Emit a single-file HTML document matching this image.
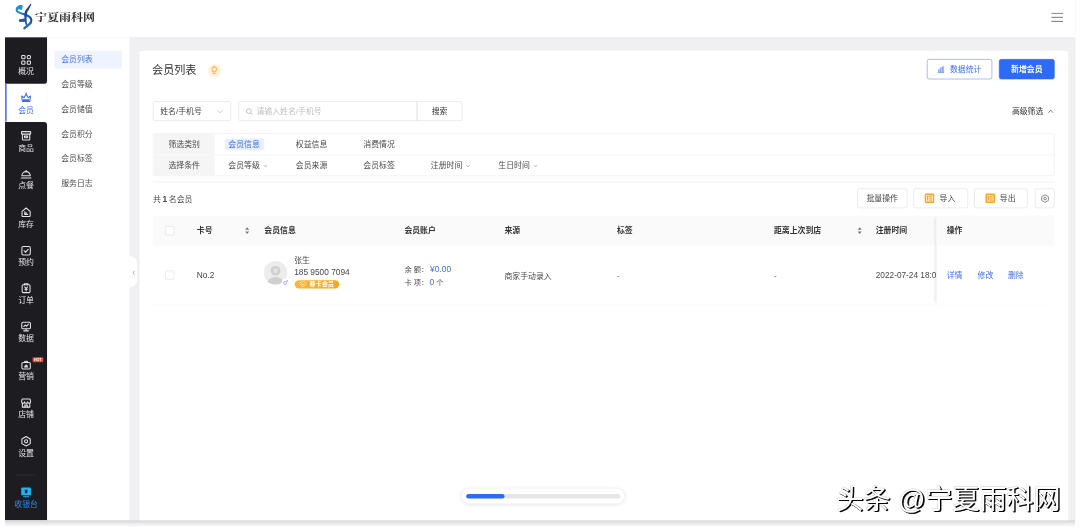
<!DOCTYPE html>
<html lang="zh-CN">
<head>
<meta charset="utf-8">
<title>会员列表</title>
<style>
html,body{margin:0;padding:0;background:#fff;width:1080px;height:529px;overflow:hidden}
body{font-family:"Liberation Sans","Noto Sans CJK SC",sans-serif;position:relative}
#app{filter:blur(0.7px);position:absolute;left:4.8px;top:0;width:1903px;height:925px;transform:scale(0.5625);transform-origin:0 0;background:#f0f0f2;overflow:hidden;font-size:14px;color:#333;line-height:1}
#shadow{position:absolute;left:5px;top:519.8px;width:1070px;height:7px;background:linear-gradient(#d3d3d3,#e6e6e6 40%,#fff)}
.abs{position:absolute}
#header{position:absolute;left:0;top:0;width:1903px;height:66px;background:#fff;box-shadow:0 2px 6px rgba(0,0,0,.03);z-index:3}
#side{position:absolute;left:0;top:66px;width:75px;height:859px;background:#fff}
#side .rt{position:absolute;left:0;width:75px;background:#1c1c21;border-bottom-right-radius:6px}
#side .rb{position:absolute;left:0;width:75px;background:#1c1c21;border-top-right-radius:6px}
.hot{position:absolute;left:48.5px;top:12.5px;width:19px;height:9px;background:#f5452e;border-radius:2px;color:#fff;font-size:6.5px;font-style:normal;font-weight:bold;line-height:9px;text-align:center;letter-spacing:-0.3px}
.nav.cash{color:#2b8df6}
.nav.cash svg{color:#1ab3f7}
.nav{position:absolute;left:0;width:75px;height:68px;color:#e4e4e6;text-align:center}
.nav svg{position:absolute;left:27px;top:15.5px;width:21px;height:21px}
.nav span{position:absolute;left:0;width:75px;top:39px;font-size:14px;line-height:16px}
.nav.act{color:#3d6cf5}
.nav.act:before{content:"";position:absolute;left:0;top:0;width:2.5px;height:68px;background:#5577f2}
#sub{position:absolute;left:75px;top:66px;width:146px;height:859px;background:#fff}
.si{position:absolute;left:13px;width:120px;height:32px;line-height:32px;padding-left:12px;box-sizing:border-box;font-size:14px;color:#4d4d4d;border-radius:3px}
.si.act{background:#eff3ff;color:#4a72f0}
#card{position:absolute;left:239px;top:90px;width:1651px;height:860px;background:#fff;border-radius:5px}

#title{position:absolute;left:22.5px;top:20.5px;font-size:19.7px;line-height:28px;color:#333}
#bulb{position:absolute;left:122px;top:24px;width:23px;height:23px;border-radius:12px;background:#fff0d9}
#bulb svg{position:absolute;left:4px;top:3px;width:14px;height:16px}
.btn{position:absolute;box-sizing:border-box;border:1px solid #dedede;border-radius:4px;background:#fff;color:#555;font-size:14px;text-align:center;white-space:nowrap}
#b-stat{left:1400px;top:15px;width:116px;height:36px;line-height:34px;border-color:#6a8af6;color:#3d6cf5;padding-left:22px}
#b-stat svg{position:absolute;left:17px;top:11px;width:13px;height:13px}
#b-add{left:1528px;top:15px;width:99px;height:36px;line-height:34px;background:#2d6bf6;border-color:#2d6bf6;color:#fff;font-weight:bold}
#adv{position:absolute;left:1538px;top:98px;width:88px;font-size:14px;line-height:20px;color:#333;text-align:right;white-space:nowrap}
#sel{position:absolute;left:24px;top:90px;width:139px;height:35px;box-sizing:border-box;border:1px solid #dedede;border-radius:4px;line-height:33px;padding-left:12px;color:#444}
#sel svg{position:absolute;right:13px;top:12px;width:11px;height:11px}
#inp{position:absolute;left:176px;top:90px;width:318px;height:35px;box-sizing:border-box;border:1px solid #dedede;border-radius:4px 0 0 4px;line-height:33px;padding-left:31px;color:#c0c0c0}
#inp svg{position:absolute;left:12px;top:11px;width:13px;height:13px}
#sbtn{position:absolute;left:493px;top:90px;width:81px;height:35px;box-sizing:border-box;border:1px solid #dedede;border-radius:0 4px 4px 0;line-height:33px;text-align:center;color:#333}
#ftab{position:absolute;left:24px;top:147px;width:1603px;height:76px;box-sizing:border-box;border:1px solid #ebebeb;border-radius:4px;overflow:hidden}
#ftab .lab{position:absolute;left:0;width:109px;height:37px;background:#f5f5f5;text-align:center;line-height:37px;color:#4a4a4a}
#ftab .row2{top:37px;border-top:1px solid #ebebeb}
#ftab .ln{position:absolute;left:109px;top:37px;width:1500px;height:1px;background:#ebebeb}
#ftab .it{position:absolute;height:37px;line-height:37px;color:#4a4a4a;white-space:nowrap}
#ftab .pill{position:absolute;left:127px;top:8px;width:70px;height:21px;border-radius:3px;background:#e8efff}
.chev{display:inline-block;width:8px;height:8px;margin-left:6px;vertical-align:0}
#hr{position:absolute;left:24px;top:233px;width:1603px;height:1px;background:#ececec}
#cnt{position:absolute;left:24px;top:254px;font-size:14px;line-height:20px;color:#4a4a4a}

.tb{top:245px;height:35px;line-height:33px;color:#444}
.tb .xl{position:absolute;left:19px;top:8px;width:17px;height:17px;border-radius:2px;background:#f9a42b}
.tb .xl svg{position:absolute;left:2px;top:2px;width:13px;height:13px}
#tbl{position:absolute;left:24px;top:293px;width:1603px;height:160px;overflow:hidden}
#thead{position:absolute;left:0;top:0;width:1603px;height:53px;background:#fafafa}
.th{position:absolute;top:0;height:53px;line-height:53px;font-weight:bold;color:#333;font-size:14px;white-space:nowrap}
.td{position:absolute;top:53px;height:106px;line-height:106px;color:#4a4a4a;font-size:14px;white-space:nowrap}
#rowln{position:absolute;left:0;top:159px;width:1603px;height:1px;background:#ececec}
.cb{position:absolute;left:22px;width:16px;height:16px;box-sizing:border-box;border:1px solid #dedede;border-radius:2px;background:#fff}
.sort{position:absolute;top:20px;width:9px;height:14px}
#fix{position:absolute;left:1393px;top:0;width:210px;height:160px;background:#fff;box-shadow:-3px 0 6px -2px rgba(0,0,0,.16)}
#fix .h{position:absolute;left:0;top:0;width:210px;height:53px;background:#fafafa}
#fix a{position:absolute;top:53px;line-height:106px;color:#3d6cf5;font-size:14px;text-decoration:none}
#ava{position:absolute;left:197px;top:80.5px;width:42px;height:42px;border-radius:21px;background:#ececec;overflow:hidden}
#gender{position:absolute;left:229px;top:112px;width:10px;height:10px;background:#fff;border-radius:7px;padding:2px}
#vip{position:absolute;left:252px;top:115px;width:79px;height:15px;border-radius:8px;background:linear-gradient(90deg,#f9b73a,#f6a51c);color:#fff;font-size:11px;line-height:15px;font-weight:bold;box-sizing:border-box;padding-left:26px;white-space:nowrap}
#vip svg{position:absolute;left:8px;top:2px;width:14px;height:11px}
.lnk{color:#3d6cf5}
#sbar{position:absolute;left:812px;top:869px;width:289px;height:26px;border-radius:13px;background:#fff;box-shadow:0 1px 10px rgba(0,0,0,.13)}
#sbar .t{position:absolute;left:8px;top:9px;width:274px;height:8px;border-radius:4px;background:#e6e6e6}
#sbar .f{position:absolute;left:8px;top:9px;width:68px;height:8px;border-radius:4px;background:#2d6bf6}
#wm{filter:blur(0.3px);position:absolute;left:830px;top:478px;width:245px;height:45px}
#ham{position:absolute;left:1860px;top:22px;width:21px;height:17px;z-index:5}
#coll{position:absolute;left:221px;top:455px;width:14px;height:56px;background:#fff;border-radius:0 14px 14px 0}
#coll svg{position:absolute;left:5px;top:25px;width:6px;height:10px}
</style>
</head>
<body>
<div id="shadow"></div>
<div id="app">
  <div id="header">
    <svg id="swoosh" viewBox="0 0 467 529" style="position:absolute;left:9.24px;top:0;width:53.35px;height:60.44px">
      <defs><linearGradient id="lg1" gradientUnits="userSpaceOnUse" x1="90" y1="100" x2="345" y2="330"><stop offset="0" stop-color="#1a96d2"/><stop offset="0.5" stop-color="#1d74b8"/><stop offset="1" stop-color="#1c3f8c"/></linearGradient>
      <linearGradient id="lg2" gradientUnits="userSpaceOnUse" x1="0" y1="60" x2="0" y2="400"><stop offset="0" stop-color="#1c2f86"/><stop offset="1" stop-color="#1f63ad"/></linearGradient></defs>
      <path d="M178 96 C120 100 92 135 106 170 C122 205 210 212 275 245 C335 278 345 315 318 352" fill="none" stroke="url(#lg1)" stroke-width="33" stroke-linecap="round"/>
      <path d="M325 350 C300 385 255 410 222 440" fill="none" stroke="#1f6db6" stroke-width="36" stroke-linecap="round"/>
      <path d="M120 96 C150 76 184 76 190 90 C196 112 188 146 180 158 C150 140 122 140 104 156 C92 132 100 110 120 96 Z" fill="#1a93cf"/>
      <path d="M332 62 L320 58 L240 160 C222 185 218 240 224 288 L152 298 C132 303 132 338 155 343 L230 338 C234 362 240 384 252 398 L268 384 C254 330 256 240 268 188 C290 150 318 100 332 62 Z" fill="url(#lg2)"/>
    </svg>
    <svg id="logo-text" viewBox="0 -30 120 40" style="position:absolute;left:52.5px;top:8.3px;width:120px;height:40px;transform:scaleY(0.88);transform-origin:0 24px" fill="#2a2a2a"><text x="0.3" y="0" font-size="21.4" font-weight="bold" font-family="'Liberation Serif','Noto Serif CJK SC',serif" textLength="107" lengthAdjust="spacing">宁夏雨科网</text></svg>
  </div>
  <div id="side">
    <div class="rt" style="top:0;height:83px"></div>
    <div class="rb" style="top:151px;height:708px"></div>
    <div style="position:absolute;left:20px;top:778px;width:35px;height:1px;background:rgba(255,255,255,.12)"></div>
    <div class="nav" style="top:14.0px"><svg viewBox="0 0 18 18" fill="none" stroke="currentColor" stroke-width="1.6" stroke-linecap="round"><rect x="2.3" y="2.3" width="5" height="5" rx="1.3"/><rect x="10.7" y="2.3" width="5" height="5" rx="1.8"/><rect x="2.3" y="10.7" width="5" height="5" rx="1.3"/><rect x="10.7" y="10.7" width="5" height="5" rx="1.3"/></svg><span>概况</span></div>
    <div class="nav act" style="top:81.8px"><svg viewBox="0 0 18 18" fill="none" stroke="currentColor" stroke-width="1.6" stroke-linecap="round"><path d="M2.2 6.6 L5.8 9.2 L9 3.6 L12.2 9.2 L15.8 6.6 L14.6 15 H3.4 Z" stroke-linejoin="round"/><path d="M4 11.6 H14 V14.6 H4 Z" fill="currentColor" stroke="none"/><circle cx="9" cy="2.4" r="1" fill="currentColor" stroke="none"/></svg><span>会员</span></div>
    <div class="nav" style="top:149.6px"><svg viewBox="0 0 18 18" fill="none" stroke="currentColor" stroke-width="1.6" stroke-linecap="round"><rect x="2" y="2.6" width="14" height="3.8" rx="0.8"/><path d="M3.4 6.4 V14 a1.4 1.4 0 0 0 1.4 1.4 H13.2 a1.4 1.4 0 0 0 1.4 -1.4 V6.4"/><path d="M6.6 9.4 H11.4 V11 a0.8 0.8 0 0 1 -0.8 0.8 H7.4 a0.8 0.8 0 0 1 -0.8 -0.8 Z"/></svg><span>商品</span></div>
    <div class="nav" style="top:217.4px"><svg viewBox="0 0 18 18" fill="none" stroke="currentColor" stroke-width="1.6" stroke-linecap="round"><path d="M2.6 11.6 a6.4 6.4 0 0 1 12.8 0 Z" stroke-linejoin="round"/><path d="M1.6 15 H16.4"/><path d="M9 5.2 V3.6"/></svg><span>点餐</span></div>
    <div class="nav" style="top:285.2px"><svg viewBox="0 0 18 18" fill="none" stroke="currentColor" stroke-width="1.6" stroke-linecap="round"><path d="M2.8 7.4 L9 2.4 L15.2 7.4 V14.2 a1.2 1.2 0 0 1 -1.2 1.2 H4 a1.2 1.2 0 0 1 -1.2 -1.2 Z" stroke-linejoin="round"/><path d="M7 8.2 V12.2 H11.4 M7 10.2 H10"/></svg><span>库存</span></div>
    <div class="nav" style="top:353.0px"><svg viewBox="0 0 18 18" fill="none" stroke="currentColor" stroke-width="1.6" stroke-linecap="round"><rect x="2.6" y="2.8" width="12.8" height="12.8" rx="2"/><path d="M6 9.2 L8.2 11.4 L12.2 7"/></svg><span>预约</span></div>
    <div class="nav" style="top:420.8px"><svg viewBox="0 0 18 18" fill="none" stroke="currentColor" stroke-width="1.6" stroke-linecap="round"><rect x="3" y="3.6" width="12" height="12" rx="1.6"/><path d="M6.4 3.6 V2.2 H11.6 V3.6"/><path d="M6.8 7 L9 9.4 L11.2 7 M9 9.4 V13 M7 10.6 H11"/></svg><span>订单</span></div>
    <div class="nav" style="top:488.6px"><svg viewBox="0 0 18 18" fill="none" stroke="currentColor" stroke-width="1.6" stroke-linecap="round"><rect x="2.4" y="2.6" width="13.2" height="9.8" rx="1.6"/><path d="M5.4 15.6 H12.6 M9 12.4 V15.6"/><path d="M5.4 9 L7.6 6.6 L9.6 8.6 L12.6 5.4"/></svg><span>数据</span></div>
    <div class="nav" style="top:556.4px"><svg viewBox="0 0 18 18" fill="none" stroke="currentColor" stroke-width="1.6" stroke-linecap="round"><path d="M4.4 5.4 H13.6 a1.8 1.8 0 0 1 1.8 1.8 V14 a1.4 1.4 0 0 1 -1.4 1.4 H4 a1.4 1.4 0 0 1 -1.4 -1.4 V7.2 a1.8 1.8 0 0 1 1.8 -1.8 Z" stroke-linejoin="round"/><path d="M6.4 5.2 C6.6 3.2 11.4 3.2 11.6 5.2"/><path d="M9 8.8 V12.4 M6.6 12.4 H11.4 M7.4 10.6 V12.4 M10.6 10 V12.4"/></svg><span>营销</span><i class="hot">HOT</i></div>
    <div class="nav" style="top:624.2px"><svg viewBox="0 0 18 18" fill="none" stroke="currentColor" stroke-width="1.6" stroke-linecap="round"><path d="M3 3 H15 L16 7.2 a2.3 2.3 0 0 1 -4.66 0 a2.3 2.3 0 0 1 -4.68 0 a2.3 2.3 0 0 1 -4.66 0 Z" stroke-linejoin="round"/><path d="M3.4 9.4 V15.2 H14.6 V9.4"/><path d="M7.2 15.2 V12.2 H10.8 V15.2"/></svg><span>店铺</span></div>
    <div class="nav" style="top:692.0px"><svg viewBox="0 0 18 18" fill="none" stroke="currentColor" stroke-width="1.6" stroke-linecap="round"><path d="M9 1.8 L15.4 5.4 V12.6 L9 16.2 L2.6 12.6 V5.4 Z" stroke-linejoin="round"/><circle cx="9" cy="9" r="2.4"/></svg><span>设置</span></div>
    <div class="nav cash" style="top:783px"><svg viewBox="0 0 18 18" fill="currentColor" stroke="none"><path d="M2.6 1.6 H15.4 a1 1 0 0 1 1 1 V12.4 a1 1 0 0 1 -1 1 H2.6 a1 1 0 0 1 -1 -1 V2.6 a1 1 0 0 1 1 -1 Z M7 5 V8.4 a2 2 0 0 0 4 0 V5 Z" fill-rule="evenodd"/><rect x="4.4" y="14.6" width="9.2" height="1.8" rx="0.6"/></svg><span>收银台</span></div>
  </div>
  <div id="sub">
    <div class="si act" style="top:24px">会员列表</div>
    <div class="si" style="top:68px">会员等级</div>
    <div class="si" style="top:112px">会员储值</div>
    <div class="si" style="top:156px">会员积分</div>
    <div class="si" style="top:200px">会员标签</div>
    <div class="si" style="top:244px">服务日志</div>
  </div>
  <div id="card">
    <div id="title">会员列表</div>
    <div id="bulb"><svg viewBox="0 0 14 16" fill="none" stroke="#f7a928" stroke-width="1.6" stroke-linecap="round"><path d="M7 1.6 a4.2 4.2 0 0 1 2.6 7.5 V10.6 H4.4 V9.1 A4.2 4.2 0 0 1 7 1.6 Z" stroke-linejoin="round"/><path d="M5.2 13.4 H8.8"/></svg></div>
    <div class="btn" id="b-stat"><svg viewBox="0 0 13 13" fill="none" stroke="#6f8ff7" stroke-width="1.3"><path d="M1 12 H12.4 M2.6 12 V7 H5 V12 M6 12 V3.6 H8.4 V12 M9.6 12 V1.6 H11.8 V12"/></svg>数据统计</div>
    <div class="btn" id="b-add">新增会员</div>
    <div id="adv">高级筛选<svg class="chev" viewBox="0 0 10 10" fill="none" stroke="#555" stroke-width="1.3" style="width:12px;height:10px;margin-left:7px"><path d="M0.8 7.4 L5 2.8 L9.2 7.4"/></svg></div>
    <div id="sel">姓名/手机号<svg viewBox="0 0 11 11" fill="none" stroke="#b5b5b5" stroke-width="1.3"><path d="M1 3.4 L5.5 7.8 L10 3.4"/></svg></div>
    <div id="inp"><svg viewBox="0 0 13 13" fill="none" stroke="#b5b5b5" stroke-width="1.4"><circle cx="5.6" cy="5.6" r="4.2"/><path d="M8.8 8.8 L12.2 12.2"/></svg>请输入姓名/手机号</div>
    <div id="sbtn">搜索</div>
    <div id="ftab">
      <div class="lab" style="top:0">筛选类别</div>
      <div class="lab" style="top:38px">选择条件</div>
      <div class="ln"></div>
      <div class="pill"></div>
      <div class="it" style="left:133px;top:0;color:#3d6cf5">会员信息</div>
      <div class="it" style="left:253px;top:0">权益信息</div>
      <div class="it" style="left:373px;top:0">消费情况</div>
      <div class="it" style="left:133px;top:38px">会员等级<svg class="chev" viewBox="0 0 8 8" fill="none" stroke="#888" stroke-width="1.1"><path d="M1 2.6 L4 5.6 L7 2.6"/></svg></div>
      <div class="it" style="left:253px;top:38px">会员来源</div>
      <div class="it" style="left:373px;top:38px">会员标签</div>
      <div class="it" style="left:493px;top:38px">注册时间<svg class="chev" viewBox="0 0 8 8" fill="none" stroke="#888" stroke-width="1.1"><path d="M1 2.6 L4 5.6 L7 2.6"/></svg></div>
      <div class="it" style="left:613px;top:38px">生日时间<svg class="chev" viewBox="0 0 8 8" fill="none" stroke="#888" stroke-width="1.1"><path d="M1 2.6 L4 5.6 L7 2.6"/></svg></div>
    </div>
    <div id="hr"></div>
    <div id="cnt">共 <b style="font-size:15px;font-weight:bold;margin:0 -1px 0 -1px">1</b> 名会员</div>
    <div class="btn tb" style="left:1276px;width:89px">批量操作</div>
    <div class="btn tb" style="left:1376px;width:97px;padding-left:24px"><i class="xl"><svg viewBox="0 0 13 13" fill="none" stroke="#fff" stroke-width="1.2"><rect x="1.2" y="1.6" width="10.6" height="9.8"/><path d="M5 1.6 V11.4 M5 4.8 H11.8 M5 8 H11.8"/></svg></i>导入</div>
    <div class="btn tb" style="left:1484px;width:95px;padding-left:24px"><i class="xl"><svg viewBox="0 0 13 13" fill="none" stroke="#fff" stroke-width="1.2"><rect x="1.2" y="1.6" width="10.6" height="9.8"/><path d="M5 1.6 V11.4 M5 4.8 H11.8 M5 8 H11.8"/></svg></i>导出</div>
    <div class="btn tb" style="left:1592px;width:35px"><svg viewBox="0 0 16 16" fill="none" stroke="#555" stroke-width="1.2" style="position:absolute;left:9px;top:9px;width:16px;height:16px"><path d="M8 1.2 L13.9 4.6 V11.4 L8 14.8 L2.1 11.4 V4.6 Z" stroke-linejoin="round"/><circle cx="8" cy="8" r="2.3"/></svg></div>
    <div id="tbl">
      <div id="thead"></div>
      <i class="cb" style="top:19px"></i>
      <div class="th" style="left:78px">卡号</div><svg class="sort" style="left:163px" viewBox="0 0 8 12" fill="#777"><path d="M4 0.6 L7.2 4.6 H0.8 Z M4 11.4 L0.8 7.4 H7.2 Z"/></svg>
      <div class="th" style="left:198px">会员信息</div>
      <div class="th" style="left:447px">会员账户</div>
      <div class="th" style="left:625px">来源</div>
      <div class="th" style="left:825px">标签</div>
      <div class="th" style="left:1104px">距离上次到店</div><svg class="sort" style="left:1252px" viewBox="0 0 8 12" fill="#777"><path d="M4 0.6 L7.2 4.6 H0.8 Z M4 11.4 L0.8 7.4 H7.2 Z"/></svg>
      <div class="th" style="left:1285px">注册时间</div>
      <i class="cb" style="top:98px"></i>
      <div class="td" style="left:78px;font-size:14.8px;color:#444">No.2</div>
      <div id="ava"><svg viewBox="0 0 40 40" width="42" height="42"><circle cx="20" cy="16.5" r="8.2" fill="#cfcfcf"/><circle cx="20" cy="16.5" r="4.2" fill="#e2e2e2"/><path d="M5 40 a15 13 0 0 1 30 0 Z" fill="#cfcfcf"/></svg></div>
      <svg id="gender" viewBox="0 0 10 10" fill="none" stroke="#7f9df5" stroke-width="1.3"><circle cx="4" cy="6" r="2.6"/><path d="M6 4 L9 1 M6.4 1 H9 V3.6"/></svg>
      <div class="td" style="left:251px;top:70px;height:20px;line-height:20px">张生</div>
      <div class="td" style="left:251px;top:90px;height:20px;line-height:20px;font-size:14.8px">185 9500 7094</div>
      <div id="vip"><svg viewBox="0 0 14 11" fill="none" stroke="#fff" stroke-width="1.1"><path d="M3.6 0.8 H10.4 L13.2 4 L7 10.2 L0.8 4 Z" stroke-linejoin="round"/><path d="M4.6 4 L7 6.6 L9.4 4"/></svg>尊卡会员</div>
      <div class="td" style="left:447px;top:86px;height:20px;line-height:20px;font-size:13px">余 额：<span class="lnk" style="font-size:15px;margin-left:3px">¥0.00</span></div>
      <div class="td" style="left:447px;top:108px;height:20px;line-height:20px;font-size:13px">卡 项：<span class="lnk" style="font-size:15px;margin-left:2px">0</span> 个</div>
      <div class="td" style="left:625px;top:55px">商家手动录入</div>
      <div class="td" style="left:825px">-</div>
      <div class="td" style="left:1104px">-</div>
      <div class="td" style="left:1285px;font-size:14.7px">2022-07-24 18:06:32</div>
      <div id="rowln"></div>
      <div id="fix"><div class="h"></div><div class="th" style="left:18px">操作</div>
        <a style="left:18px">详情</a><a style="left:73px">修改</a><a style="left:127px">删除</a>
      </div>
    </div>
  </div>
  <div id="coll"><svg viewBox="0 0 6 10" fill="none" stroke="#888" stroke-width="1.2"><path d="M4.6 1.4 L1.6 5 L4.6 8.6"/></svg></div>
  <div id="sbar"><div class="t"></div><div class="f"></div></div>
  <svg id="ham" viewBox="0 0 21 17" fill="none" stroke="#666" stroke-width="1.6"><path d="M0 1.6 H21 M0 8.8 H21 M0 16 H21"/></svg>
</div>
<svg id="wm" role="img" aria-label="头条 @宁夏雨科网" viewBox="-6 -30.6 245 45" font-family="'Liberation Sans','Noto Sans CJK SC',sans-serif" font-size="27"><title>头条 @宁夏雨科网</title><text x="0.5" y="0" textLength="224" lengthAdjust="spacing" fill="#000" opacity=".22" stroke="#000" stroke-width="0.8">头条 @宁夏雨科网</text><text x="2.1" y="1.6" textLength="224" lengthAdjust="spacing" fill="#000" opacity=".85">头条 @宁夏雨科网</text><text x="1.5" y="1" textLength="224" lengthAdjust="spacing" fill="#000">头条 @宁夏雨科网</text><text x="0.5" y="0" textLength="224" lengthAdjust="spacing" fill="#fff">头条 @宁夏雨科网</text></svg>
</body>
</html>
